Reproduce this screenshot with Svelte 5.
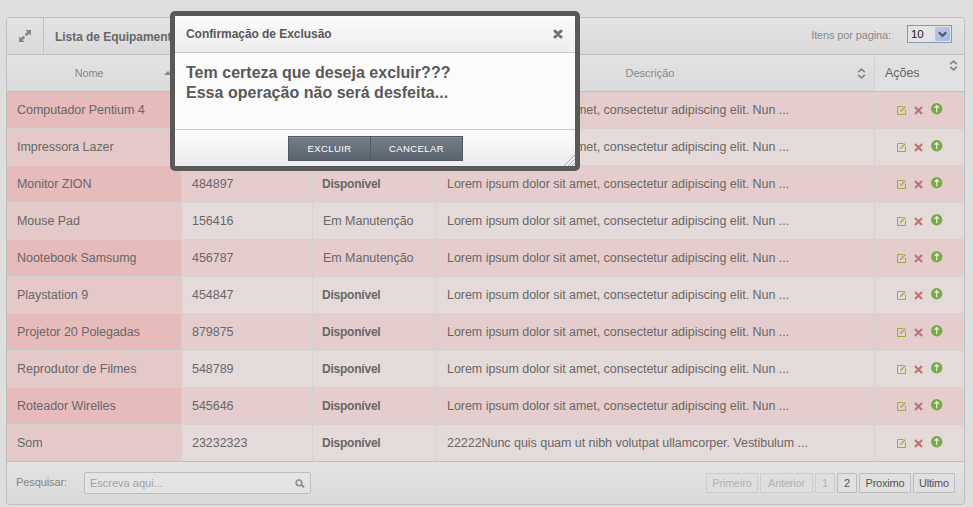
<script>
  const lorem = 'Lorem ipsum dolor sit amet, consectetur adipiscing elit. Nun ...';
  const rows = [
    ['Computador Pentium 4', '', '', lorem],
    ['Impressora Lazer', '', '', lorem],
    ['Monitor ZION', '484897', 'Disponível', lorem],
    ['Mouse Pad', '156416', 'Em Manutenção', lorem],
    ['Nootebook Samsumg', '456787', 'Em Manutenção', lorem],
    ['Playstation 9', '454847', 'Disponível', lorem],
    ['Projetor 20 Polegadas', '879875', 'Disponível', lorem],
    ['Reprodutor de Filmes', '548789', 'Disponível', lorem],
    ['Roteador Wirelles', '545646', 'Disponível', lorem],
    ['Som', '23232323', 'Disponível', '22222Nunc quis quam ut nibh volutpat ullamcorper. Vestibulum ...']
  ];
  const pages = [
    { label: 'Primeiro', off: true, w: 52 },
    { label: 'Anterior', off: true, w: 53 },
    { label: '1', off: true, w: 20 },
    { label: '2', off: false, w: 20 },
    { label: 'Proximo', off: false, w: 52 },
    { label: 'Ultimo', off: false, w: 42 }
  ];
</script>

{#snippet sorter()}
  <svg class="sorter" width="9" height="11" viewBox="0 0 9 11" fill="none" stroke="#858585" stroke-width="1.7">
    <path d="M1.2 4.2 4.5 1.2l3.3 3M1.2 6.8l3.3 3 3.3-3" />
  </svg>
{/snippet}

<div class="page">
  <section class="panel">
    <header class="bar">
      <div class="expand">
        <svg width="14" height="14" viewBox="0 0 14 14" fill="#888">
          <path d="M7.5 1H13v5.500l-1.800-1.800-2.500 2.500-1.900-1.900 2.500-2.500zM6.500 13H1V7.500l1.800 1.800 2.500-2.500 1.900 1.900-2.500 2.500z" />
        </svg>
      </div>
      <h2>Lista de Equipamentos</h2>
      <span class="per">Itens por pagina:</span>
      <div class="select">
        <span>10</span>
        <i>
          <svg width="9" height="7" viewBox="0 0 9 7" fill="none" stroke="#4a5c80" stroke-width="2.2"><path d="M.8 1.2 4.5 4.9 8.2 1.2" /></svg>
        </i>
      </div>
    </header>

    <div class="row head">
      <div class="name"><span>Nome</span><svg class="up" width="8" height="4" viewBox="0 0 8 4"><path d="M0 4 4 0l4 4z" fill="#888" /></svg></div>
      <div class="code"></div>
      <div class="state"></div>
      <div class="desc"><span>Descrição</span>{@render sorter()}</div>
      <div class="acts"><span>Ações</span>{@render sorter()}</div>
    </div>

    {#each rows as [name, code, state, desc], i}
      <div class="row item" class:odd={i % 2 === 0}>
        <div class="name">{name}</div>
        <div class="code">{code}</div>
        <div class="state" class:free={state === 'Disponível'}>{state}</div>
        <div class="desc">{desc}</div>
        <div class="acts">
          <svg class="edit" width="9" height="9" viewBox="0 0 9 9" fill="none" stroke="#98ab40">
            <path d="M6.500.5H.5v8h8V3.500" /><path d="M3.200 5.800 8.400.6" stroke-width="1.300" />
          </svg>
          <svg class="del" width="9" height="9" viewBox="0 0 9 9" fill="none" stroke="#be7474" stroke-width="2.2">
            <path d="m1 1 7 7M8 1 1 8" />
          </svg>
          <svg class="send" width="12" height="12" viewBox="0 0 12 12">
            <circle cx="5.700" cy="5.700" r="5.700" fill="#78ab44" />
            <path d="M5.700 9.300V3M3.600 4.800 5.700 2.700l2.100 2.100" fill="none" stroke="#e6e6e6" stroke-width="1.300" />
          </svg>
        </div>
      </div>
    {/each}

    <footer>
      <span class="find">Pesquisar:</span>
      <div class="search">
        <span>Escreva aqui...</span>
        <svg width="10" height="9" viewBox="0 0 10 9" fill="none" stroke="#8c8c8c">
          <circle cx="4" cy="3.8" r="2.9" stroke-width="1.5" /><path d="m6.2 5.8 2.8 2.5" stroke-width="2" />
        </svg>
      </div>
      <nav>
        {#each pages as p}
          <span class="pg" class:off={p.off} style:width="{p.w}px">{p.label}</span>
        {/each}
      </nav>
    </footer>
  </section>

  <div class="dialog">
    <div class="title">
      <span>Confirmação de Exclusão</span>
      <svg width="10" height="10" viewBox="0 0 10 10" stroke="#707070" stroke-width="3" stroke-linecap="round"><path d="m2 2 6 6M8 2 2 8" /></svg>
    </div>
    <div class="message">Tem certeza que deseja excluir???<br />Essa operação não será desfeita...</div>
    <div class="buttons">
      <button class="yes">EXCLUIR</button><button class="no">CANCELAR</button>
      <svg class="grip" width="12" height="12" viewBox="0 0 12 12" stroke="#aaa" stroke-width="1"><path d="M1 12 12 1M5 12l7-7M9 12l3-3" /></svg>
    </div>
  </div>
</div>

<style>
  :global(body) { background: #dedede; }
  .page {
    position: relative;
    box-sizing: border-box;
    width: 973px;
    height: 507px;
    padding: 17px 8px 0 6px;
    overflow: hidden;
    background: #dedede;
    font: 12.5px/18px "Liberation Sans", Arial, sans-serif;
    letter-spacing: -0.04px;
    color: #686868;
  }
  .page * { box-sizing: border-box; }
  svg { display: block; flex: none; }
  .panel {
    width: 959px;
    height: 488px;
    border: 1px solid #bebebe;
    border-radius: 4px;
    overflow: hidden;
  }
  .bar {
    display: flex;
    align-items: center;
    height: 37px;
    border-bottom: 1px solid #c0c0c0;
    background: linear-gradient(#e3e3e3, #dadada);
  }
  .expand {
    display: flex;
    align-items: center;
    justify-content: center;
    width: 37px;
    height: 36px;
    border-right: 1px solid #c2c2c2;
  }
  h2 { margin: 2px 0 0 11px; font-size: 12px; letter-spacing: -0.05px; }
  .per { margin: -2px 0 0 auto; font-size: 11px; letter-spacing: -0.13px; color: #8a8a8a; }
  .select {
    display: flex;
    align-items: center;
    justify-content: space-between;
    width: 45px;
    height: 18px;
    margin: -4px 12px 0 16px;
    padding: 0 1px 0 3px;
    border: 1px solid #8799b1;
    background: #e4e4e4;
    font-size: 11.5px;
    color: #222;
  }
  .select i {
    display: flex;
    align-items: center;
    justify-content: center;
    width: 15px;
    height: 14px;
    border-radius: 1px;
    background: linear-gradient(135deg, #bdc8e0, #a9bade);
  }
  .row { display: flex; height: 37px; }
  .row > div {
    display: flex;
    align-items: center;
    padding: 0 10px;
    border-right: 1px solid #d3d3d3;
    border-bottom: 1px solid #d3d3d3;
    white-space: nowrap;
  }
  .row > .name { width: 175px; }
  .row > .code { width: 131px; }
  .row > .state { width: 124px; }
  .row > .desc { width: 438px; }
  .row > .acts { width: 89px; border-right: 0; }
  .item > div { background: #e5dada; }
  .item > .name { background: #e5c8c8; }
  .item.odd > div { background: #e5cdcd; }
  .item.odd > .name { background: #e6bbbb; }
  .row > .free { font-size: 12px; font-weight: bold; letter-spacing: -0.22px; padding-left: 9px; }
  .item:nth-last-child(2) > div { border-bottom-color: #c0c0c0; }
  .head { background: linear-gradient(#e3e3e3, #dadada); color: #888; font-size: 11px; }
  .row.head > div { border-bottom-color: #c0c0c0; }
  .head span { flex: 1; text-align: center; }
  .head .name span { padding-right: 3px; letter-spacing: -0.2px; }
  .head .desc span { padding-right: 4px; letter-spacing: 0; }
  .row.head > .acts { background: #e1e1e1; color: #656565; font-size: 12.5px; align-items: flex-start; padding: 9px 6px 0 10px; }
  .head .acts span { text-align: left; }
  .head .acts svg { margin-top: -4px; }
  .head .desc svg { margin-right: -2px; }
  .up { margin-right: -1px; }
  .item .edit { margin: 1px 0 0 12px; }
  .item .del { margin: 1px 0 0 8px; }
  .item .send { margin: -2px 0 0 8px; }
  footer {
    display: flex;
    align-items: center;
    height: 42px;
    padding: 0 9px;
    background: linear-gradient(#e3e3e3, #d9d9d9);
    font-size: 11px;
  }
  .find { width: 68px; letter-spacing: -0.1px; color: #858585; margin-top: -2px; }
  .search {
    display: flex;
    align-items: center;
    justify-content: space-between;
    width: 227px;
    height: 22px;
    padding: 0 5px;
    border: 1px solid #bdbdbd;
    border-radius: 2px;
    background: #e4e4e4;
    color: #a2a2a2;
    letter-spacing: 0;
  }
  nav { display: flex; gap: 2px; margin-left: auto; }
  .pg {
    height: 20px;
    border: 1px solid #bdbdbd;
    border-radius: 1px;
    background: #e0e0e0;
    text-align: center;
    letter-spacing: -0.2px;
    color: #555;
  }
  .off { border-color: #cdcdcd; background: #dfdfdf; color: #b2b2b2; }
  .dialog {
    position: absolute;
    left: 170px;
    top: 11px;
    width: 410px;
    height: 160px;
    border: 5px solid #595959;
    border-radius: 5px;
    background: #fbfbfb;
    color: #595959;
  }
  .title {
    display: flex;
    align-items: center;
    justify-content: space-between;
    height: 37px;
    padding: 0 12px 0 11px;
    border-bottom: 1px solid #cbcbcb;
    background: linear-gradient(#fbfbfb, #ededed);
    font-size: 12px;
    font-weight: bold;
    letter-spacing: -0.05px;
  }
  .message { height: 76px; padding: 10px 11px; font-size: 16px; line-height: 20px; font-weight: bold; letter-spacing: 0.02px; }
  .buttons {
    position: relative;
    display: flex;
    height: 37px;
    padding: 6px 0 0 113px;
    border-top: 1px solid #cbcbcb;
    background: linear-gradient(#fbfbfb, #ededed);
  }
  button {
    height: 25px;
    padding: 0;
    border: 1px solid #4f5a69;
    background: linear-gradient(#777d87, #596470);
    box-shadow: inset 0 1px #858c96;
    color: #fff;
    font: 9.5px "Liberation Sans", Arial, sans-serif;
    letter-spacing: 0.4px;
  }
  .yes { width: 82px; border-right: 0; }
  .no { width: 93px; }
  .grip { position: absolute; right: 0; bottom: 0; }
</style>
